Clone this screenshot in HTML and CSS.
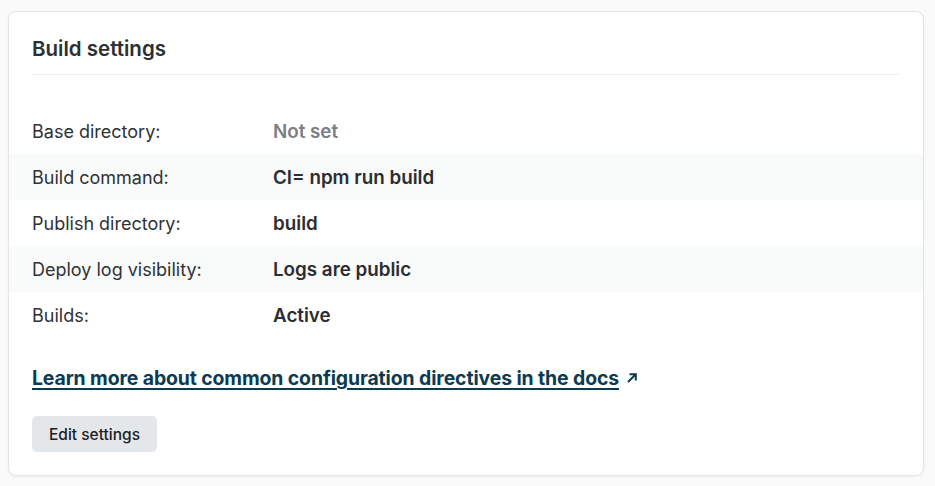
FILE: index.html
```html
<!DOCTYPE html>
<html lang="en">
<head>
<meta charset="utf-8">
<title>Build settings</title>
<link rel="stylesheet" href="styles.css">
</head>
<body>
<section class="card">
  <header class="card-header">
    <h2 class="card-title">Build settings</h2>
  </header>
  <dl class="settings">
    <div class="row">
      <dt class="label">Base directory:</dt>
      <dd class="value muted">Not set</dd>
    </div>
    <div class="row striped">
      <dt class="label">Build command:</dt>
      <dd class="value">CI= npm run build</dd>
    </div>
    <div class="row">
      <dt class="label">Publish directory:</dt>
      <dd class="value">build</dd>
    </div>
    <div class="row striped">
      <dt class="label">Deploy log visibility:</dt>
      <dd class="value">Logs are public</dd>
    </div>
    <div class="row">
      <dt class="label">Builds:</dt>
      <dd class="value">Active</dd>
    </div>
  </dl>
  <p class="docs">
    <a class="docs-link" href="#"><span class="docs-text">Learn more about common configuration directives in the docs</span><svg class="ext-icon" width="12" height="12" viewBox="0 0 12 12" aria-hidden="true"><path d="M2 10 L9.5 2.5 M3.5 2.2 H9.8 V8.5" fill="none" stroke="currentColor" stroke-width="2" stroke-linecap="butt"/></svg></a>
  </p>
  <div class="actions">
    <button class="btn" type="button">Edit settings</button>
  </div>
</section>
</body>
</html>
```

FILE: styles.css
```css
* { box-sizing: border-box; }

html, body {
  margin: 0;
  background: #fafafa;
}

body {
  padding: 11px 11px 10px 8px;
  font-family: Inter, "Noto Sans", "Liberation Sans", sans-serif;
  color: #2e3033;
}

.card {
  background: #fff;
  border: 1px solid #e4e5e7;
  border-radius: 8px;
  box-shadow: 0 1px 3px rgba(0, 0, 0, 0.05);
  padding: 25px 0 23px 0;
}

.card-header {
  margin: 0 23px 0 23px;
  padding-bottom: 13px;
  border-bottom: 1px solid #f0f1f2;
}

.card-title {
  margin: 0;
  font-size: 20.5px;
  line-height: 24px;
  font-weight: 600;
  color: #2c2f33;
}

.settings {
  margin: 33px 0 0 0;
}

.row {
  display: flex;
  align-items: center;
  height: 46px;
  padding: 0 23px;
}

.row.striped {
  background: #f9fafa;
}

.label {
  width: 241px;
  margin: 0;
  font-size: 18px;
  font-weight: 400;
  color: #2f3236;
}

.value {
  margin: 0;
  font-size: 18.8px;
  font-weight: 600;
  color: #2b2d31;
}

.value.muted {
  color: #7b7e82;
}

.docs {
  margin: 27px 23px 0 23px;
  line-height: 26px;
}

.docs-link {
  display: inline-flex;
  align-items: center;
  gap: 7px;
  color: #0c3b51;
  font-size: 19.4px;
  font-weight: 700;
  text-decoration: none;
}

.docs-text {
  text-decoration: underline;
  text-decoration-thickness: 2px;
  text-underline-offset: 3px;
  letter-spacing: -0.1px;
}

.ext-icon {
  flex: none;
}

.actions {
  margin: 24px 23px 0 23px;
}

.btn {
  display: inline-flex;
  align-items: center;
  height: 36px;
  padding: 0 17px;
  border: 0;
  border-radius: 5px;
  background: #e4e7ea;
  font-family: inherit;
  font-size: 15.5px;
  font-weight: 500;
  color: #1e2023;
}
```
